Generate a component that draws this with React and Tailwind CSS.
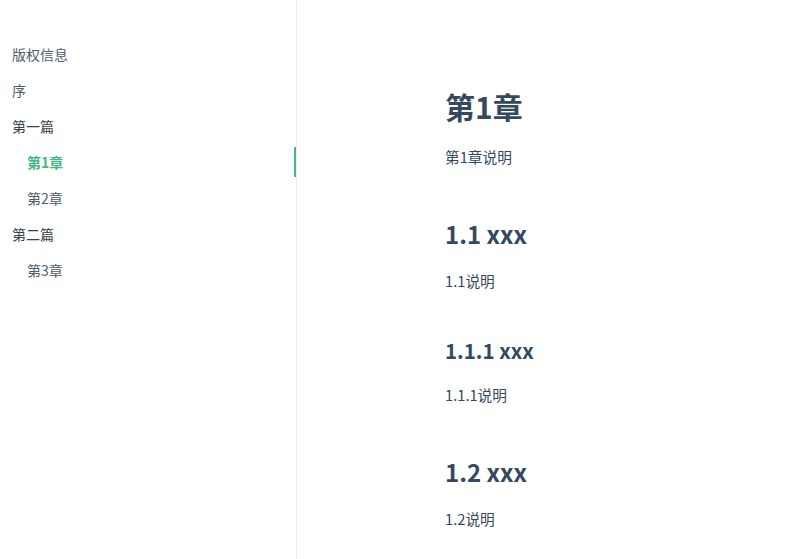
export default function App() {
  const font = { fontFamily: '"Noto Sans CJK SC", "Noto Sans", sans-serif' };
  const items = [
    { t: "版权信息", c: "text-[#505d6b]", indent: false },
    { t: "序", c: "text-[#505d6b]", indent: false },
    { t: "第一篇", c: "text-[#364149]", indent: false },
    { t: "第1章", c: "text-[#42b983] font-bold", indent: true, active: true },
    { t: "第2章", c: "text-[#505d6b]", indent: true },
    { t: "第二篇", c: "text-[#364149]", indent: false },
    { t: "第3章", c: "text-[#505d6b]", indent: true },
  ];
  return (
    <div className="flex w-[788px] h-[559px] bg-white overflow-hidden" style={font}>
      <aside className="w-[297px] shrink-0 border-r border-[#ececec] pt-[36px]">
        <ul>
          {items.map((it) => (
            <li key={it.t} className="h-9 flex items-center">
              <a
                className={`w-full h-[30px] flex items-center text-[14px] ${it.indent ? "pl-[27px]" : "pl-[12px]"} ${it.c} ${it.active ? "border-r-2 border-[#42b983]" : ""}`}
              >
                {it.t}
              </a>
            </li>
          ))}
        </ul>
      </aside>
      <main className="flex-1 pl-[148px] pt-[86px] text-[#34495e]">
        <h1 className="text-[30px] leading-[40px] font-bold">第1章</h1>
        <p className="mt-[19px] text-[14.7px] leading-[24px]">第1章说明</p>
        <h2 className="mt-[49px] text-[24px] leading-[32px] font-bold">1.1 xxx</h2>
        <p className="mt-[19px] text-[14.7px] leading-[24px]">1.1说明</p>
        <h3 className="mt-[43px] text-[20.5px] leading-[28px] font-bold">1.1.1 xxx</h3>
        <p className="mt-[19px] text-[14.7px] leading-[24px]">1.1.1说明</p>
        <h2 className="mt-[49px] text-[24px] leading-[32px] font-bold">1.2 xxx</h2>
        <p className="mt-[19px] text-[14.7px] leading-[24px]">1.2说明</p>
      </main>
    </div>
  );
}
